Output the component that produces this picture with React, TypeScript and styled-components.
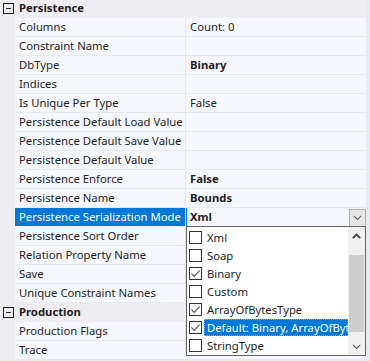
import React from 'react';
import styled, { createGlobalStyle } from 'styled-components';

const Global = createGlobalStyle`
  html, body {
    margin: 0;
    padding: 0;
    background: #e9e9ee;
  }
  body {
    font-family: "Noto Sans", "Liberation Sans", sans-serif;
    font-size: 11.3px;
    color: #1e1e1e;
  }
`;

type Prop = { kind: 'prop'; name: string; value?: string; bold?: boolean; selected?: boolean };
type Category = { kind: 'cat'; label: string };
type Row = Prop | Category;

const rows: Row[] = [
  { kind: 'cat', label: 'Persistence' },
  { kind: 'prop', name: 'Columns', value: 'Count: 0' },
  { kind: 'prop', name: 'Constraint Name' },
  { kind: 'prop', name: 'DbType', value: 'Binary', bold: true },
  { kind: 'prop', name: 'Indices' },
  { kind: 'prop', name: 'Is Unique Per Type', value: 'False' },
  { kind: 'prop', name: 'Persistence Default Load Value' },
  { kind: 'prop', name: 'Persistence Default Save Value' },
  { kind: 'prop', name: 'Persistence Default Value' },
  { kind: 'prop', name: 'Persistence Enforce', value: 'False', bold: true },
  { kind: 'prop', name: 'Persistence Name', value: 'Bounds', bold: true },
  { kind: 'prop', name: 'Persistence Serialization Mode', value: 'Xml', bold: true, selected: true },
  { kind: 'prop', name: 'Persistence Sort Order' },
  { kind: 'prop', name: 'Relation Property Name' },
  { kind: 'prop', name: 'Save' },
  { kind: 'prop', name: 'Unique Constraint Names' },
  { kind: 'cat', label: 'Production' },
  { kind: 'prop', name: 'Production Flags' },
  { kind: 'prop', name: 'Trace' },
];

const options = [
  { label: 'Xml', checked: false },
  { label: 'Soap', checked: false },
  { label: 'Binary', checked: true },
  { label: 'Custom', checked: false },
  { label: 'ArrayOfBytesType', checked: true },
  { label: 'Default: Binary, ArrayOfBytesType', checked: true, active: true },
  { label: 'StringType', checked: false },
];

const Check = () => (
  <svg width="11" height="11" viewBox="0 0 11 11">
    <path d="M1.5 5.5 L4.2 8.3 L9.6 2.6" fill="none" stroke="#5a5a5a" strokeWidth="1.2" />
  </svg>
);

const Chevron = ({ up }: { up?: boolean }) => (
  <svg width="9" height="6" viewBox="0 0 9 6">
    <path
      d={up ? 'M0.8 5.2 L4.5 1.5 L8.2 5.2' : 'M0.8 0.8 L4.5 4.5 L8.2 0.8'}
      fill="none"
      stroke={up ? '#404040' : '#606060'}
      strokeWidth={up ? 1.8 : 1.1}
    />
  </svg>
);

const CategoryRow = ({ label }: { label: string }) => (
  <RowLine>
    <Gutter>
      <Toggle />
    </Gutter>
    <CategoryLabel>{label}</CategoryLabel>
  </RowLine>
);

const PropRow = ({ name, value, bold, selected }: Prop) => (
  <RowLine>
    <Gutter />
    <NameCell $selected={selected}>{name}</NameCell>
    <ValueCell $bold={bold} $selected={selected}>
      {value}
      {selected && (
        <DropButton>
          <Chevron />
        </DropButton>
      )}
    </ValueCell>
  </RowLine>
);

export default function App() {
  return (
    <>
      <Global />
      <Frame>
        <Grid>
          {rows.map((r, i) =>
            r.kind === 'cat' ? <CategoryRow key={i} label={r.label} /> : <PropRow key={i} {...r} />,
          )}
        </Grid>

        <DropList>
          <Items>
            {options.map((o) => (
              <Item key={o.label}>
                <Box>{o.checked && <Check />}</Box>
                <ItemLabel $active={o.active}>{o.label}</ItemLabel>
              </Item>
            ))}
          </Items>
          <ScrollBar>
            <ScrollArrow>
              <Chevron up />
            </ScrollArrow>
            <Track>
              <Thumb />
            </Track>
            <ScrollArrow>
              <Chevron />
            </ScrollArrow>
          </ScrollBar>
        </DropList>
      </Frame>
    </>
  );
}

const Frame = styled.div`
  position: relative;
  width: 370px;
  height: 361px;
  overflow: hidden;
`;

const Grid = styled.div`
  width: 366px;
  margin-top: -1px;
  display: flex;
  flex-direction: column;
  background: #eeeef2;
`;

const RowLine = styled.div`
  display: flex;
  height: 19px;
`;

const Gutter = styled.div`
  width: 15px;
  flex: none;
  display: flex;
  align-items: center;
  justify-content: center;
  background: #eeeef2;
`;

const Toggle = styled.div`
  position: relative;
  width: 9px;
  height: 9px;
  margin-left: 1px;
  border: 1px solid #1e1e1e;
  &::after {
    content: '';
    position: absolute;
    left: 2px;
    top: 4px;
    width: 5px;
    height: 1px;
    background: #1e1e1e;
  }
`;

const CategoryLabel = styled.div`
  flex: 1;
  padding-left: 4px;
  line-height: 18px;
  font-weight: 700;
  border-bottom: 1px solid #eeeef2;
`;

const NameCell = styled.div<{ $selected?: boolean }>`
  width: 171px;
  flex: none;
  padding-left: 4px;
  box-sizing: border-box;
  line-height: 18px;
  white-space: nowrap;
  overflow: hidden;
  background: ${(p) => (p.$selected ? '#0078d7' : '#f5f7fc')};
  color: ${(p) => (p.$selected ? '#ffffff' : '#1e1e1e')};
  border-bottom: 1px solid #e6e8ef;
  border-right: 1px solid #e6e8ef;
`;

const ValueCell = styled.div<{ $bold?: boolean; $selected?: boolean }>`
  position: relative;
  flex: 1;
  padding-left: 4px;
  line-height: 18px;
  white-space: nowrap;
  font-weight: ${(p) => (p.$bold ? 700 : 400)};
  background: #f5f7fc;
  border-bottom: 1px solid #e6e8ef;
  box-shadow: ${(p) => (p.$selected ? 'inset 1px 0 0 #0078d7' : 'none')};
`;

const DropButton = styled.div`
  position: absolute;
  right: 0;
  top: 1px;
  width: 15px;
  height: 16px;
  display: flex;
  align-items: center;
  justify-content: center;
  background: #e6e6e6;
  border: 1px solid #adadad;
`;

const DropList = styled.div`
  position: absolute;
  left: 186px;
  top: 226px;
  width: 178px;
  height: 128px;
  display: flex;
  background: #ffffff;
  border: 1px solid #646464;
`;

const Items = styled.div`
  flex: 1;
  min-width: 0;
  display: flex;
  flex-direction: column;
  padding-top: 1px;
`;

const Item = styled.div`
  display: flex;
  align-items: center;
  height: 18px;
  gap: 2px;
  padding-left: 2px;
`;

const Box = styled.div`
  width: 11px;
  height: 11px;
  flex: none;
  border: 1px solid #333333;
  background: #ffffff;
  display: flex;
  align-items: center;
  justify-content: center;
`;

const ItemLabel = styled.div<{ $active?: boolean }>`
  flex: 1;
  min-width: 0;
  overflow: hidden;
  white-space: nowrap;
  line-height: 17px;
  padding-left: 3px;
  background: ${(p) => (p.$active ? '#0078d7' : 'transparent')};
  color: ${(p) => (p.$active ? '#ffffff' : '#1e1e1e')};
  outline: ${(p) => (p.$active ? '1px dotted #d9a040' : 'none')};
  outline-offset: -1px;
`;

const ScrollBar = styled.div`
  width: 17px;
  flex: none;
  display: flex;
  flex-direction: column;
  background: #f0f0f0;
`;

const ScrollArrow = styled.div`
  height: 17px;
  display: flex;
  align-items: center;
  justify-content: center;
`;

const Track = styled.div`
  flex: 1;
  display: flex;
  flex-direction: column;
  padding: 11px 0 6px;
`;

const Thumb = styled.div`
  flex: 1;
  margin: 0 1px;
  background: #cdcdcd;
`;
